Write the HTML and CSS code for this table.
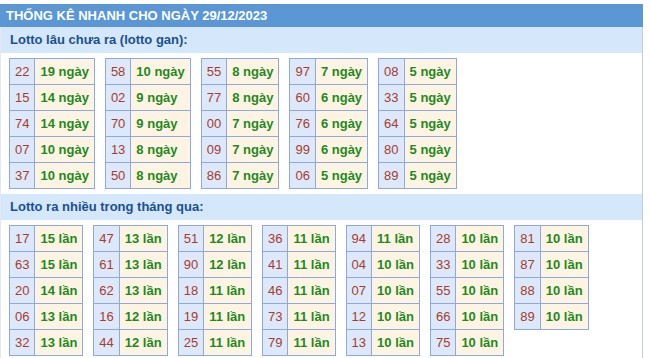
FILE: index.html
```html
<!DOCTYPE html>
<html lang="vi">
<head>
<meta charset="utf-8">
<link rel="stylesheet" href="styles.css">
</head>
<body>
<div class="box">
  <div class="title">THỐNG KÊ NHANH CHO NGÀY 29/12/2023</div>
  <div class="sub">Lotto lâu chưa ra (lotto gan):</div>
  <div class="tables">
    <table class="t"><tr><td class="n">22</td><td class="v">19 ngày</td></tr><tr><td class="n">15</td><td class="v">14 ngày</td></tr><tr><td class="n">74</td><td class="v">14 ngày</td></tr><tr><td class="n">07</td><td class="v">10 ngày</td></tr><tr><td class="n">37</td><td class="v">10 ngày</td></tr></table>
    <table class="t"><tr><td class="n">58</td><td class="v">10 ngày</td></tr><tr><td class="n">02</td><td class="v">9 ngày</td></tr><tr><td class="n">70</td><td class="v">9 ngày</td></tr><tr><td class="n">13</td><td class="v">8 ngày</td></tr><tr><td class="n">50</td><td class="v">8 ngày</td></tr></table>
    <table class="t"><tr><td class="n">55</td><td class="v">8 ngày</td></tr><tr><td class="n">77</td><td class="v">8 ngày</td></tr><tr><td class="n">00</td><td class="v">7 ngày</td></tr><tr><td class="n">09</td><td class="v">7 ngày</td></tr><tr><td class="n">86</td><td class="v">7 ngày</td></tr></table>
    <table class="t"><tr><td class="n">97</td><td class="v">7 ngày</td></tr><tr><td class="n">60</td><td class="v">6 ngày</td></tr><tr><td class="n">76</td><td class="v">6 ngày</td></tr><tr><td class="n">99</td><td class="v">6 ngày</td></tr><tr><td class="n">06</td><td class="v">5 ngày</td></tr></table>
    <table class="t"><tr><td class="n">08</td><td class="v">5 ngày</td></tr><tr><td class="n">33</td><td class="v">5 ngày</td></tr><tr><td class="n">64</td><td class="v">5 ngày</td></tr><tr><td class="n">80</td><td class="v">5 ngày</td></tr><tr><td class="n">89</td><td class="v">5 ngày</td></tr></table>
  </div>
  <div class="sub">Lotto ra nhiều trong tháng qua:</div>
  <div class="tables">
    <table class="t"><tr><td class="n">17</td><td class="v">15 lần</td></tr><tr><td class="n">63</td><td class="v">15 lần</td></tr><tr><td class="n">20</td><td class="v">14 lần</td></tr><tr><td class="n">06</td><td class="v">13 lần</td></tr><tr><td class="n">32</td><td class="v">13 lần</td></tr></table>
    <table class="t"><tr><td class="n">47</td><td class="v">13 lần</td></tr><tr><td class="n">61</td><td class="v">13 lần</td></tr><tr><td class="n">62</td><td class="v">13 lần</td></tr><tr><td class="n">16</td><td class="v">12 lần</td></tr><tr><td class="n">44</td><td class="v">12 lần</td></tr></table>
    <table class="t"><tr><td class="n">51</td><td class="v">12 lần</td></tr><tr><td class="n">90</td><td class="v">12 lần</td></tr><tr><td class="n">18</td><td class="v">11 lần</td></tr><tr><td class="n">19</td><td class="v">11 lần</td></tr><tr><td class="n">25</td><td class="v">11 lần</td></tr></table>
    <table class="t"><tr><td class="n">36</td><td class="v">11 lần</td></tr><tr><td class="n">41</td><td class="v">11 lần</td></tr><tr><td class="n">46</td><td class="v">11 lần</td></tr><tr><td class="n">73</td><td class="v">11 lần</td></tr><tr><td class="n">79</td><td class="v">11 lần</td></tr></table>
    <table class="t"><tr><td class="n">94</td><td class="v">11 lần</td></tr><tr><td class="n">04</td><td class="v">10 lần</td></tr><tr><td class="n">07</td><td class="v">10 lần</td></tr><tr><td class="n">12</td><td class="v">10 lần</td></tr><tr><td class="n">13</td><td class="v">10 lần</td></tr></table>
    <table class="t"><tr><td class="n">28</td><td class="v">10 lần</td></tr><tr><td class="n">33</td><td class="v">10 lần</td></tr><tr><td class="n">55</td><td class="v">10 lần</td></tr><tr><td class="n">66</td><td class="v">10 lần</td></tr><tr><td class="n">75</td><td class="v">10 lần</td></tr></table>
    <table class="t"><tr><td class="n">81</td><td class="v">10 lần</td></tr><tr><td class="n">87</td><td class="v">10 lần</td></tr><tr><td class="n">88</td><td class="v">10 lần</td></tr><tr><td class="n">89</td><td class="v">10 lần</td></tr></table>
  </div>
</div>
</body>
</html>
```

FILE: styles.css
```css
html, body {
  margin: 0;
  padding: 0;
  background: #ffffff;
}
body {
  padding-top: 4px;
  font-family: "Liberation Sans", Arial, sans-serif;
}
.box {
  width: 643px;
  height: 354px;
  border-right: 1px solid #c3cbe0;
  border-left: 1px solid #e3e8f2;
  box-sizing: border-box;
}
.title {
  height: 23px;
  line-height: 23px;
  background: #5b96d5;
  color: #ffffff;
  font-weight: bold;
  font-size: 13px;
  padding-left: 6px;
  margin-left: -1px;
  margin-right: -1px;
}
.sub {
  height: 26px;
  line-height: 26px;
  background: #d5e8fb;
  color: #1b4f8e;
  font-weight: bold;
  font-size: 13px;
  padding-left: 9px;
}
.tables {
  display: flex;
  align-items: flex-start;
  gap: 10px;
  padding: 5px 8px 5px 8px;
}
.t {
  border-collapse: collapse;
  font-size: 13px;
}
.t td {
  border: 1px solid #8eaadc;
  height: 26px;
  padding: 0 5px;
  box-sizing: border-box;
  white-space: nowrap;
}
.t td.n {
  background: #dde9fb;
  color: #a63c2c;
  text-align: center;
}
.t td.v {
  background: #fef4e3;
  color: #1e8a1e;
  font-weight: bold;
}
```
